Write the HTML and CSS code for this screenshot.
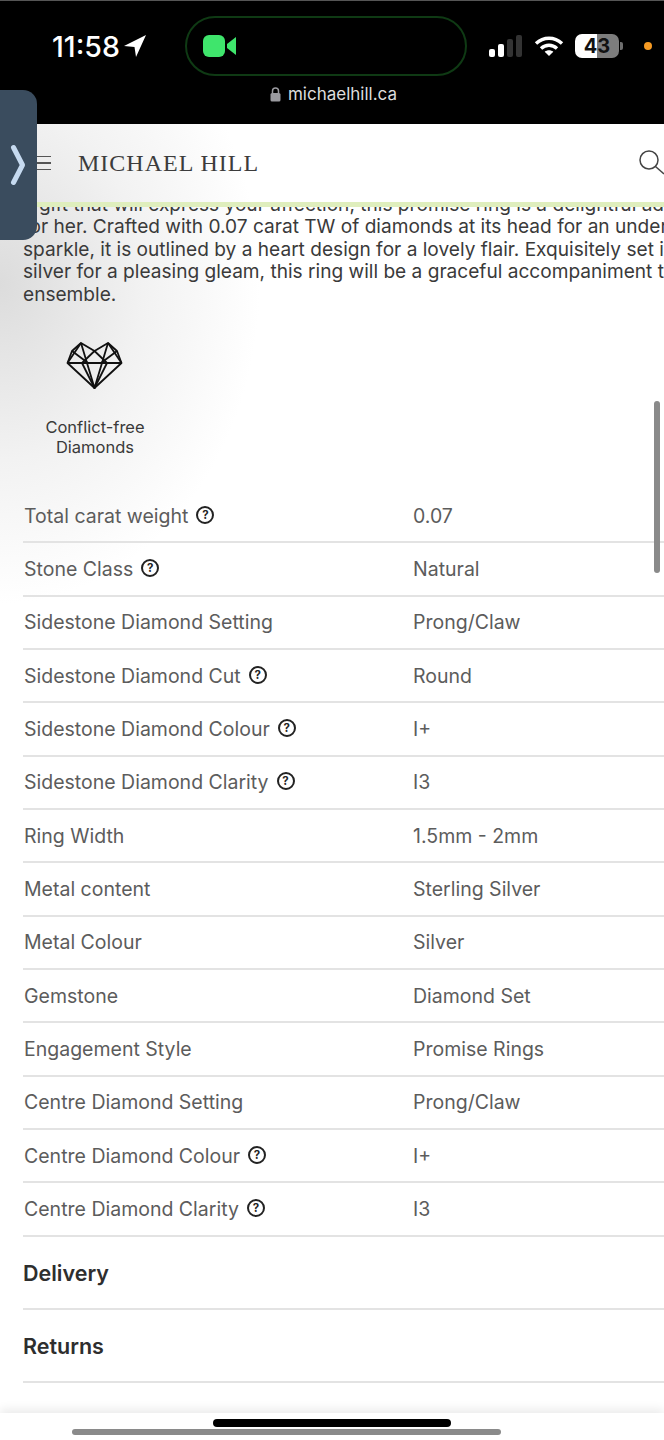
FILE: index.html

```html
<!DOCTYPE html>
<html lang="en">
<head>
    <meta charset="UTF-8">
    <meta name="viewport" content="width=device-width, initial-scale=1.0">
    <title>Michael Hill</title>
    <link rel="stylesheet" href="styles.css">
</head>
<body>

<!-- Status bar and address -->
<div class="status-area">
    <div class="status-row">
        <div class="status-time">
            <span>11:58</span>
            <svg width="24" height="24" viewBox="0 0 24 24"><path d="M23 1 1 12l10.500 1L13 23z" fill="#fff"/></svg>
        </div>
        <div class="island">
            <svg width="34" height="24" viewBox="0 0 34 24"><rect x="0" y="1" width="22" height="22" rx="6" fill="#3fe56c"/><path d="M24 10l9-7v18l-9-7z" fill="#3fe56c"/></svg>
        </div>
        <div class="status-icons">
            <div class="signal">
                <span class="bar bar-1"></span>
                <span class="bar bar-2"></span>
                <span class="bar bar-3"></span>
                <span class="bar bar-4"></span>
            </div>
            <svg class="wifi" width="30" height="22" viewBox="0 0 30 22" fill="none" stroke="#fff" stroke-width="3.400"><path d="M2 8.500c7.500-7 18.500-7 26 0"/><path d="M7 13.500c4.800-4.400 11.200-4.400 16 0"/><path d="M15 21l-4.300-4.300c2.500-2 6.100-2 8.600 0z" fill="#fff" stroke="none"/></svg>
            <div class="battery"><span>43</span></div>
            <span class="battery-tip"></span>
            <span class="orange-dot"></span>
        </div>
    </div>
    <div class="address">
        <svg width="11" height="15" viewBox="0 0 11 15"><path d="M2.500 6V4a3 3 0 0 1 6 0v2" fill="none" stroke="#9a9a9f" stroke-width="1.500"/><rect x="0.500" y="6" width="10" height="8.500" rx="1.500" fill="#9a9a9f"/></svg>
        <span>michaelhill.ca</span>
    </div>
</div>

<!-- Side tab over the page -->
<div class="side-tab">
    <svg width="16" height="42" viewBox="0 0 16 42"><path d="M3.500 3.500l9 17.500-9 17.500" fill="none" stroke="#c6daf0" stroke-width="5" stroke-linecap="round" stroke-linejoin="round"/></svg>
</div>

<div class="page">
    <header class="site-header">
        <div class="menu-icon"><span></span><span></span><span></span></div>
        <div class="logo">MICHAEL HILL</div>
        <svg class="search-icon" width="26" height="30" viewBox="0 0 26 30" fill="none" stroke="#444" stroke-width="1.500"><circle cx="11" cy="11" r="9"/><path d="M17.500 17.500 26 25"/></svg>
    </header>

    <div class="description">
        <p>a gift that will express your affection, this promise ring is a delightful addition<br>
        for her. Crafted with 0.07 carat TW of diamonds at its head for an understated<br>
        sparkle, it is outlined by a heart design for a lovely flair. Exquisitely set in sterling<br>
        silver for a pleasing gleam, this ring will be a graceful accompaniment to any<br>
        ensemble.</p>
    </div>

    <div class="feature">
        <svg width="58" height="48" viewBox="0 0 58 48" fill="none" stroke="#111" stroke-width="1.800" stroke-linejoin="round">
            <path d="M28.500 46 1.500 21 6 9 15 1 28.500 9 42 1 51 9 55.500 21z"/>
            <path d="M1.500 21H55.500"/>
            <path d="M15 1 28.500 46 42 1"/>
            <path d="M15 1 1.500 21M42 1 55.500 21"/>
            <path d="M6 9 22 21M51 9 35 21"/>
            <path d="M28.500 9 16 21 28.500 46 41 21z"/>
        </svg>
        <div class="feature-label">Conflict-free<br>Diamonds</div>
    </div>

    <!-- Specifications -->
    <div class="specs">
        <div class="spec-row">
            <div class="spec-name">Total carat weight <span class="help">?</span></div>
            <div class="spec-value">0.07</div>
        </div>
        <div class="spec-row">
            <div class="spec-name">Stone Class <span class="help">?</span></div>
            <div class="spec-value">Natural</div>
        </div>
        <div class="spec-row">
            <div class="spec-name">Sidestone Diamond Setting</div>
            <div class="spec-value">Prong/Claw</div>
        </div>
        <div class="spec-row">
            <div class="spec-name">Sidestone Diamond Cut <span class="help">?</span></div>
            <div class="spec-value">Round</div>
        </div>
        <div class="spec-row">
            <div class="spec-name">Sidestone Diamond Colour <span class="help">?</span></div>
            <div class="spec-value">I+</div>
        </div>
        <div class="spec-row">
            <div class="spec-name">Sidestone Diamond Clarity <span class="help">?</span></div>
            <div class="spec-value">I3</div>
        </div>
        <div class="spec-row">
            <div class="spec-name">Ring Width</div>
            <div class="spec-value">1.5mm - 2mm</div>
        </div>
        <div class="spec-row">
            <div class="spec-name">Metal content</div>
            <div class="spec-value">Sterling Silver</div>
        </div>
        <div class="spec-row">
            <div class="spec-name">Metal Colour</div>
            <div class="spec-value">Silver</div>
        </div>
        <div class="spec-row">
            <div class="spec-name">Gemstone</div>
            <div class="spec-value">Diamond Set</div>
        </div>
        <div class="spec-row">
            <div class="spec-name">Engagement Style</div>
            <div class="spec-value">Promise Rings</div>
        </div>
        <div class="spec-row">
            <div class="spec-name">Centre Diamond Setting</div>
            <div class="spec-value">Prong/Claw</div>
        </div>
        <div class="spec-row">
            <div class="spec-name">Centre Diamond Colour <span class="help">?</span></div>
            <div class="spec-value">I+</div>
        </div>
        <div class="spec-row">
            <div class="spec-name">Centre Diamond Clarity <span class="help">?</span></div>
            <div class="spec-value">I3</div>
        </div>
    </div>

    <div class="accordion-row">Delivery</div>
    <div class="accordion-row">Returns</div>
</div>

<div class="scrollbar"></div>

<!-- Bottom bars -->
<div class="bottom-area">
    <div class="home-bar"></div>
    <div class="scroll-bottom"></div>
</div>

</body>
</html>
```

FILE: styles.css

```css
:root {
    --text-color: #3a3a3a;
    --spec-color: #5c5c5c;
    --line-color: #e3e3e3;
}

* {
    box-sizing: border-box;
}

body {
    margin: 0;
    width: 664px;
    height: 1440px;
    overflow: hidden;
    position: relative;
    font-family: Inter, 'Liberation Sans', sans-serif;
    background-color: #fff;
}

/* Status bar */
.status-area {
    height: 124px;
    background-color: #000;
    border-top: 1px solid #555;
    color: #fff;
}

.status-row {
    display: flex;
    align-items: center;
    height: 60px;
    margin-top: 15px;
    padding-left: 52px;
}

.status-time {
    display: flex;
    align-items: center;
    gap: 3px;
    width: 133px;
    font-size: 28.500px;
    font-weight: 500;
}

.island {
    display: flex;
    align-items: center;
    width: 282px;
    height: 60px;
    padding-left: 16px;
    border: 2px solid #0f3a14;
    border-radius: 30px;
}

.status-icons {
    display: flex;
    align-items: center;
    margin-left: 22px;
}

.signal {
    display: flex;
    align-items: flex-end;
    gap: 3px;
    height: 22px;
}

.bar {
    width: 6px;
    border-radius: 2px;
    background-color: #fff;
}

.bar-1 { height: 8px; }
.bar-2 { height: 13px; }
.bar-3 { height: 18px; background-color: #333; }
.bar-4 { height: 22px; background-color: #333; }

.wifi {
    margin-left: 12px;
}

.battery {
    width: 44px;
    height: 24px;
    margin-left: 11px;
    border-radius: 7px;
    background: linear-gradient(to right, #fff 50%, #7d7d7d 50%);
    color: #111;
    font-size: 20px;
    font-weight: 700;
    line-height: 24px;
    text-align: center;
}

.battery-tip {
    width: 3px;
    height: 8px;
    margin-left: 1px;
    border-radius: 0 2px 2px 0;
    background-color: #6e6e6e;
}

.orange-dot {
    width: 8px;
    height: 8px;
    margin-left: 21px;
    border-radius: 50%;
    background-color: #f59a23;
}

.address {
    display: flex;
    align-items: center;
    justify-content: center;
    gap: 7px;
    margin-top: 8px;
    padding-left: 3px;
    color: #ddd;
    font-size: 17px;
}

/* Side tab */
.side-tab {
    position: absolute;
    left: 0;
    top: 90px;
    width: 37px;
    height: 150px;
    display: flex;
    align-items: center;
    padding-left: 10px;
    border-radius: 0 14px 14px 0;
    background-color: #3a4c5e;
    z-index: 5;
}

/* Page */
.page {
    height: 1316px;
    background: radial-gradient(ellipse 260px 320px at 0 160px, #dcdcdc 0%, #f2f2f2 55%, #fff 100%);
    color: var(--text-color);
}

.site-header {
    display: flex;
    align-items: center;
    height: 83px;
    padding: 0 0 0 36px;
    border-bottom: 5px solid #dfeebd;
}

.menu-icon {
    display: flex;
    flex-direction: column;
    gap: 5px;
    width: 15px;
}

.menu-icon span {
    height: 1.500px;
    background-color: #555;
}

.logo {
    margin-left: 27px;
    font-family: 'Liberation Serif', serif;
    font-size: 24px;
    letter-spacing: 1px;
    color: #3c3c3c;
}

.search-icon {
    margin-left: auto;
    margin-top: 2px;
}

.description {
    height: 98px;
    overflow: hidden;
    padding-left: 23px;
    white-space: nowrap;
}

.description p {
    margin: -14px 0 0 0;
    font-size: 19.100px;
    line-height: 22.400px;
}

.feature {
    display: flex;
    flex-direction: column;
    align-items: center;
    width: 144px;
    margin: 37px 0 0 23px;
}

.feature-label {
    margin-top: 27px;
    font-size: 16.500px;
    line-height: 20px;
    text-align: center;
}

/* Specifications */
.specs {
    margin: 33px 0 0 23px;
}

.spec-row {
    display: flex;
    align-items: center;
    height: 53.330px;
    border-bottom: 2px solid var(--line-color);
    color: var(--spec-color);
    font-size: 19.500px;
}

.spec-name {
    display: flex;
    align-items: center;
    gap: 8px;
    width: 390px;
    padding-left: 1px;
}

.help {
    display: inline-block;
    width: 18px;
    height: 18px;
    margin-top: -2px;
    border: 2px solid #222;
    border-radius: 50%;
    color: #222;
    font-size: 11.500px;
    font-weight: 700;
    line-height: 14px;
    text-align: center;
}

.accordion-row {
    display: flex;
    align-items: center;
    height: 73px;
    margin-left: 23px;
    padding-top: 2px;
    border-bottom: 2px solid var(--line-color);
    font-size: 21.500px;
    font-weight: 600;
    color: #2e2e2e;
}

.scrollbar {
    position: absolute;
    left: 654px;
    top: 401px;
    width: 6px;
    height: 172px;
    border-radius: 3px;
    background-color: #8a8a8a;
}

/* Bottom bars */
.bottom-area {
    position: absolute;
    left: 0;
    right: 0;
    top: 1413px;
    height: 27px;
    background-color: #fff;
    box-shadow: 0 -4px 10px rgba(0, 0, 0, 0.08);
}

.home-bar {
    width: 238px;
    height: 8px;
    margin: 6px 0 0 213px;
    border-radius: 4px;
    background-color: #000;
}

.scroll-bottom {
    width: 429px;
    height: 6px;
    margin: 2px 0 0 72px;
    border-radius: 3px;
    background-color: #8a8a8a;
}
```
